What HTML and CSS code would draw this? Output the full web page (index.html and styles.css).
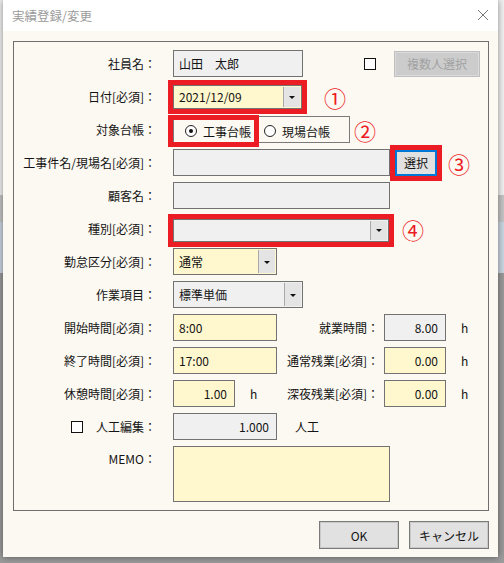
FILE: index.html
```html
<!DOCTYPE html>
<html lang="ja">
<head>
  <meta charset="UTF-8">
  <title>実績登録/変更</title>
  <link rel="stylesheet" href="styles.css">
</head>
<body>

<div class="dialog">
  <div class="titlebar">
    <span class="title">実績登録/変更</span>
    <svg class="close" width="12" height="12" viewBox="0 0 12 12">
      <path d="M1 1 L11 11 M11 1 L1 11" stroke="#777" stroke-width="1" fill="none"/>
    </svg>
  </div>

  <div class="body">
    <div class="group">

      <div class="row">
        <span class="lbl">社員名：</span>
        <div class="field gray w130">山田　太郎</div>
        <span class="check after-name"></span>
        <button class="btn disabled multi">複数人選択</button>
      </div>

      <div class="row">
        <span class="lbl">日付[必須]：</span>
        <div class="combo yellow w129 h24 mark">
          <span class="val">2021/12/09</span>
          <span class="drop"><i></i></span>
        </div>
        <span class="num n1">①</span>
      </div>

      <div class="row">
        <span class="lbl">対象台帳：</span>
        <div class="radios">
          <label class="radio first mark"><span class="dot on"></span>工事台帳</label>
          <label class="radio second"><span class="dot"></span>現場台帳</label>
        </div>
        <span class="num n2">②</span>
      </div>

      <div class="row">
        <span class="lbl">工事件名/現場名[必須]：</span>
        <div class="field gray w217"></div>
        <button class="btn pick mark">選択</button>
        <span class="num n3">③</span>
      </div>

      <div class="row">
        <span class="lbl">顧客名：</span>
        <div class="field gray w217"></div>
      </div>

      <div class="row">
        <span class="lbl">種別[必須]：</span>
        <div class="combo gray w216 h23 mark low">
          <span class="val"></span>
          <span class="drop"><i></i></span>
        </div>
        <span class="num n4">④</span>
      </div>

      <div class="row">
        <span class="lbl">勤怠区分[必須]：</span>
        <div class="combo yellow w104">
          <span class="val">通常</span>
          <span class="drop"><i></i></span>
        </div>
      </div>

      <div class="row">
        <span class="lbl">作業項目：</span>
        <div class="combo gray w130">
          <span class="val">標準単価</span>
          <span class="drop"><i></i></span>
        </div>
      </div>

      <div class="row">
        <span class="lbl">開始時間[必須]：</span>
        <div class="field yellow w104">8:00</div>
        <span class="rlbl">就業時間：</span>
        <div class="field gray w62 num-val">8.00</div>
        <span class="unit">h</span>
      </div>

      <div class="row">
        <span class="lbl">終了時間[必須]：</span>
        <div class="field yellow w104">17:00</div>
        <span class="rlbl">通常残業[必須]：</span>
        <div class="field yellow w62 num-val">0.00</div>
        <span class="unit">h</span>
      </div>

      <div class="row">
        <span class="lbl">休憩時間[必須]：</span>
        <div class="cell">
          <div class="field yellow w62 num-val">1.00</div>
          <span class="unit">h</span>
        </div>
        <span class="rlbl">深夜残業[必須]：</span>
        <div class="field yellow w62 num-val">0.00</div>
        <span class="unit">h</span>
      </div>

      <div class="row">
        <span class="lbl"><span class="check"></span><span class="lbl-text">人工編集：</span></span>
        <div class="field gray w104 num-val">1.000</div>
        <span class="suffix">人工</span>
      </div>

      <div class="row memo-row">
        <span class="lbl memo-lbl">MEMO：</span>
        <div class="field yellow w217 memo"></div>
      </div>

    </div>

    <div class="actions">
      <button class="btn act">OK</button>
      <button class="btn act">キャンセル</button>
    </div>
  </div>
</div>

</body>
</html>
```

FILE: styles.css
```css
body {
  margin: 0;
  height: 563px;
  overflow: hidden;
  font-family: "Noto Sans CJK JP", "Noto Sans", sans-serif;
  font-size: 12px;
  color: #141414;
  background: linear-gradient(to bottom, #f2f2f2 0, #f2f2f2 195px, #c6c6c6 195px, #c6c6c6 222px, #cbd6e2 222px, #cbd6e2 273px, #9b9b9b 273px);
}

.dialog {
  margin-left: 3px;
  width: 495px;
  height: 557px;
  background: #fcf9f2;
  box-shadow: 0 0 7px rgba(0, 0, 0, 0.45);
  display: flex;
  flex-direction: column;
}

.titlebar {
  height: 31px;
  background: #fff;
  display: flex;
  align-items: center;
  justify-content: space-between;
  padding: 0 9px 0 9px;
}
.title {
  color: #9a9a9a;
  font-size: 12.5px;
}
.close {
  margin-top: -1px;
}

.body {
  padding: 10px 9px 0 10px;
}

.group {
  border: 1px solid #6e6e6e;
  height: 470px;
  box-sizing: border-box;
  padding-top: 8px;
  display: flex;
  flex-direction: column;
  gap: 6px;
}

.row {
  height: 27px;
  display: flex;
  align-items: center;
}
.lbl {
  width: 142px;
  margin-right: 17px;
  text-align: right;
  white-space: nowrap;
}

.field, .combo {
  box-sizing: border-box;
  height: 27px;
  border: 1px solid #727272;
  display: flex;
  align-items: center;
  padding-left: 5px;
  white-space: nowrap;
}
.gray { background: #f0f0f0; }
.yellow { background: #fff8cf; }
.num-val {
  justify-content: flex-end;
  padding-right: 7px;
}
.w62 { width: 62px; }
.w104 { width: 104px; }
.w129 { width: 129px; }
.w130 { width: 130px; }
.w216 { width: 216px; }
.w217 { width: 217px; }
.h23 { height: 23px; }
.h24 { height: 24px; }
.low { margin-top: 3px; }

.combo {
  padding-left: 0;
  align-items: stretch;
}
.combo .val {
  flex: 1;
  padding-left: 5px;
  display: flex;
  align-items: center;
}
.combo .drop {
  width: 16px;
  margin: 1px;
  margin-left: 0;
  background: #e4e4e4;
  border-left: 1px solid #a9a9a9;
  display: flex;
  align-items: center;
  justify-content: center;
}
.combo .drop i {
  width: 0;
  height: 0;
  border-left: 3px solid transparent;
  border-right: 3px solid transparent;
  border-top: 3px solid #111;
  margin-top: 1px;
}

.mark {
  outline: 5px solid #ec1c24;
}

.num {
  color: #ec1c24;
  font-size: 22px;
  line-height: 1;
}
.n1 { margin-left: 22px; }
.n2 { margin-left: 4px; }
.n3 { margin-left: 11px; }
.n4 { margin-left: 13px; }

.check {
  display: inline-block;
  box-sizing: border-box;
  width: 12px;
  height: 12px;
  border: 1px solid #111;
  background: #fff;
}
.after-name {
  margin-left: 61px;
}

.btn {
  box-sizing: border-box;
  font-family: inherit;
  font-size: 12px;
  color: #141414;
  background: #e1e1e1;
  border: 1px solid #adadad;
  padding: 0;
}
.multi {
  margin-left: 18px;
  width: 86px;
  height: 26px;
}
.disabled {
  background: #cccccc;
  border: 1px solid #bfbfbf;
  box-shadow: inset 0 0 0 1px #dadada;
  color: #a2a2a2;
}
.pick {
  margin-left: 5px;
  width: 42px;
  height: 26px;
  border: 2px solid #0078d7;
}

.radios {
  box-sizing: border-box;
  width: 177px;
  height: 27px;
  border: 1px solid #7a7a7a;
  display: flex;
  align-items: flex-end;
}
.radio {
  display: flex;
  align-items: center;
  box-sizing: border-box;
  height: 22px;
  white-space: nowrap;
}
.radio.first {
  margin-left: -1px;
  width: 81px;
  padding-left: 12px;
}
.radio.second {
  padding-left: 10px;
}
.dot {
  box-sizing: border-box;
  width: 12px;
  height: 12px;
  border: 1px solid #222;
  border-radius: 50%;
  background: #fff;
  margin-right: 6px;
  display: flex;
  align-items: center;
  justify-content: center;
}
.dot.on::after {
  content: "";
  width: 4px;
  height: 4px;
  border-radius: 50%;
  background: #111;
}

.rlbl {
  width: 102px;
  margin-right: 5px;
  text-align: right;
  white-space: nowrap;
}
.unit {
  margin-left: 15px;
}
.cell {
  width: 104px;
  display: flex;
  align-items: center;
}
.suffix {
  margin-left: 18px;
}
.lbl .check {
  margin-right: 13px;
  vertical-align: -1px;
}

.memo-row {
  height: 56px;
  align-items: flex-start;
}
.memo {
  height: 56px;
}
.memo-lbl {
  margin-top: 4px;
}

.actions {
  display: flex;
  justify-content: flex-end;
  gap: 10px;
  padding-top: 10px;
}
.act {
  width: 80px;
  height: 28px;
  border: 1px solid #7a7a7a;
  box-shadow: inset 0 0 0 1px #c9c9c9;
}
```
